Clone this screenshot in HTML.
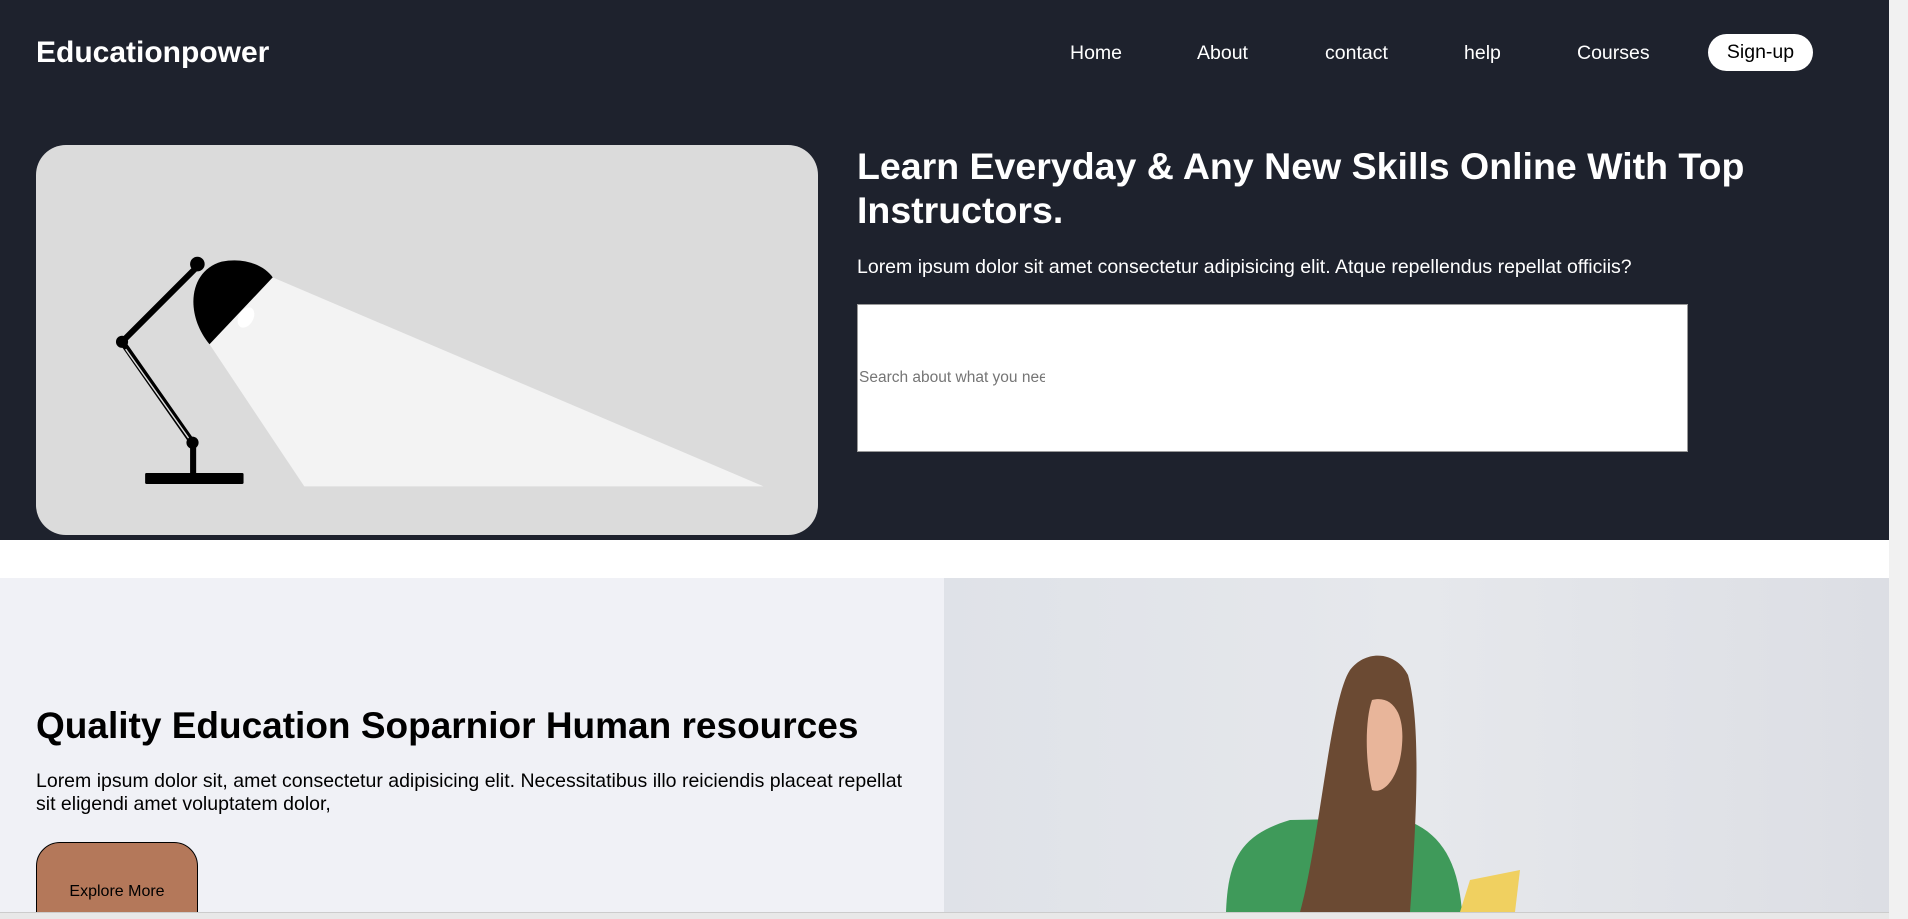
<!DOCTYPE html>
<html><head><meta charset="utf-8"><style>
*{margin:0;padding:0;box-sizing:border-box}
html,body{width:1908px;height:919px;overflow:hidden}
body{background:#fff;font-family:"Liberation Sans",Arial,sans-serif;position:relative}
.hdr{position:absolute;left:0;top:0;width:1889px;height:540px;background:#1e222d}
.logo{position:absolute;left:36px;top:36px;font-size:30px;font-weight:bold;color:#fff}
.nav{position:absolute;top:42px;font-size:19.5px;color:#fff}
.sign{position:absolute;left:1708px;top:34px;width:105px;height:37px;border-radius:19px;background:#fff;color:#000;font-size:19.5px;text-align:center;line-height:37px}
.box{position:absolute;left:36px;top:145px;width:782px;height:390px;border-radius:30px;background:#dbdbdb;overflow:hidden}
h1{position:absolute;left:857px;top:144px;font-size:37.5px;line-height:44px;color:#fff;font-weight:bold;width:1000px}
.p1{position:absolute;left:857px;top:256px;font-size:19.5px;color:#fff}
.search{position:absolute;left:857px;top:304px;width:831px;height:148px;background:#fff;border:1px solid #999}
.search span{position:absolute;left:1px;top:64px;font-size:15.5px;color:#757575;width:186px;overflow:hidden;white-space:nowrap}
.s2{position:absolute;left:0;top:578px;width:1889px;height:334px;background:#f0f1f6;overflow:hidden}
h2{position:absolute;left:36px;top:127px;font-size:37px;font-weight:bold;color:#000}
.p2{position:absolute;left:36px;top:192px;font-size:19.5px;line-height:23px;color:#000;width:890px}
.btn{position:absolute;left:36px;top:264px;width:162px;height:100px;border:1.5px solid #000;border-radius:24px;background:#b4785a;font-size:16px;text-align:center;padding-top:40px;color:#000}
.sb{position:absolute;left:1889px;top:0;width:19px;height:919px;background:#f1f1f1}
.thumb{position:absolute;left:1893px;top:18px;width:11px;height:296px;background:#a8a8a8;border-radius:6px}
.bot{position:absolute;left:0;top:912px;width:1889px;height:7px;background:#e8e8e8;border-top:1px solid #ccc}
</style></head><body>
<div class="hdr">
<div class="logo">Educationpower</div>
<div class="nav" style="left:1070px">Home</div>
<div class="nav" style="left:1197px">About</div>
<div class="nav" style="left:1325px">contact</div>
<div class="nav" style="left:1464px">help</div>
<div class="nav" style="left:1577px">Courses</div>
<div class="sign">Sign-up</div>
<div class="box"><svg width="782" height="390" viewBox="0 0 642 321">
<polygon points="194,109 598,281 220,281 142,164" fill="#f3f3f3"/>
<path d="M194,109 L142,164 C122,140 124,104 152,96 C172,92 188,100 194,109Z" fill="#000"/>
<ellipse cx="172" cy="142" rx="6" ry="9" fill="#fff" transform="rotate(30 172 142)"/>
<polyline points="132,100 70,162 128,245" fill="none" stroke="#000" stroke-width="5"/>
<line x1="73" y1="168" x2="126" y2="243" stroke="#dbdbdb" stroke-width="1.2"/>
<circle cx="132" cy="98" r="6"/><circle cx="70" cy="162" r="5"/><circle cx="128" cy="245" r="5"/>
<rect x="126" y="245" width="5" height="28"/>
<rect x="89" y="270" width="81" height="9" rx="1"/>
</svg></div>
<h1>Learn Everyday &amp; Any New Skills Online With Top Instructors.</h1>
<div class="p1">Lorem ipsum dolor sit amet consectetur adipisicing elit. Atque repellendus repellat officiis?</div>
<div class="search"><span>Search about what you need</span></div>
</div>
<div class="s2">
<svg style="position:absolute;left:944px;top:0" width="945" height="334" viewBox="944 578 945 334">
<defs><linearGradient id="g" x1="0" x2="1"><stop offset="0" stop-color="#dfe2e8"/><stop offset=".5" stop-color="#e6e8ec"/><stop offset="1" stop-color="#dcdee4"/></linearGradient></defs>
<rect x="944" y="578" width="945" height="334" fill="url(#g)"/>
<path d="M1226,912 C1228,860 1240,835 1290,820 L1400,818 C1440,830 1458,860 1462,912Z" fill="#3f9a5a"/>
<path d="M1300,912 C1320,840 1330,700 1350,670 C1365,650 1395,650 1408,675 C1420,720 1418,800 1410,912Z" fill="#6b4a33"/>
<path d="M1372,700 C1390,695 1405,710 1402,745 C1400,775 1385,795 1372,790 C1365,760 1365,720 1372,700Z" fill="#e8b59a"/>
<path d="M1460,912 L1470,880 L1520,870 L1515,912Z" fill="#f0d060"/>
</svg>
<h2>Quality Education Soparnior Human resources</h2>
<div class="p2">Lorem ipsum dolor sit, amet consectetur adipisicing elit. Necessitatibus illo reiciendis placeat repellat sit eligendi amet voluptatem dolor,</div>
<div class="btn">Explore More</div>
</div>
<div class="bot"></div>
<div class="sb"><div class="thumb"></div></div>
</body></html>
